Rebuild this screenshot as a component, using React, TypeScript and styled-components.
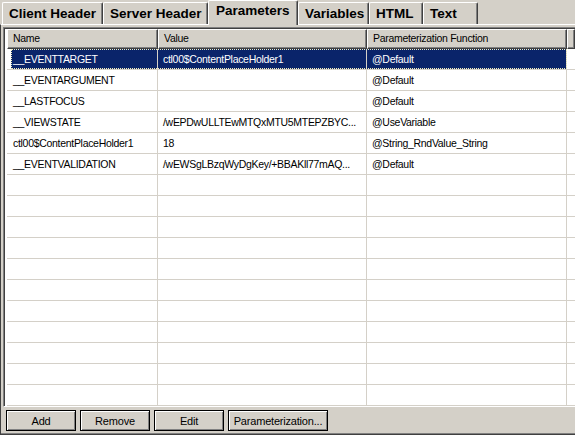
import React from "react";
import styled, { createGlobalStyle } from "styled-components";

const GlobalStyle = createGlobalStyle`
  html, body {
    margin: 0;
    padding: 0;
    background: #d4d0c8;
  }
  body {
    font-family: "Liberation Sans", Arial, sans-serif;
    font-size: 11px;
    color: #000;
  }
`;

const Window = styled.div`
  width: 575px;
  height: 435px;
  display: flex;
  flex-direction: column;
  background: #d4d0c8;
  overflow: hidden;
`;

const TabStrip = styled.div`
  display: flex;
  align-items: flex-end;
  height: 25px;
  padding-left: 2px;
  position: relative;
  z-index: 1;
`;

const Tab = styled.div<{ $active?: boolean; $width: number }>`
  box-sizing: border-box;
  width: ${(p) => p.$width}px;
  height: ${(p) => (p.$active ? 25 : 22)}px;
  margin-bottom: ${(p) => (p.$active ? 0 : 1)}px;
  padding: ${(p) => (p.$active ? "2px 0 0 7px" : "3px 0 0 6px")};
  border-top: 1px solid #fff;
  border-left: 1px solid #fff;
  border-right: 1px solid #404040;
  box-shadow: inset -1px 0 #808080;
  border-radius: 2px 2px 0 0;
  background: #d4d0c8;
  font-size: 13.5px;
  font-weight: bold;
  line-height: 16px;
  white-space: nowrap;
  color: #000;
`;

const Panel = styled.div`
  flex: 1;
  display: flex;
  flex-direction: column;
  border-top: 1px solid #fff;
  margin-top: -1px;
  border-left: 1px solid #404040;
  border-bottom: 1px solid #404040;
  box-shadow: inset 0 -1px #808080;
  padding: 2px 0 0 2px;
`;

const ListView = styled.div`
  height: 377px;
  border-top: 1px solid #808080;
  border-left: 1px solid #808080;
  border-bottom: 1px solid #fff;
  box-shadow: inset 1px 1px #404040;
  padding: 1px 0 0 3px;
  background: #fff;
  overflow: hidden;
`;

const HeaderRow = styled.div`
  display: flex;
  height: 20px;
`;

const HeaderCell = styled.div<{ $width?: number }>`
  box-sizing: border-box;
  ${(p) => (p.$width ? `width: ${p.$width}px;` : "flex: 1;")}
  height: 20px;
  padding-left: 5px;
  background: #d4d0c8;
  border-top: 1px solid #fff;
  border-left: 1px solid #fff;
  border-right: 1px solid #404040;
  border-bottom: 1px solid #404040;
  box-shadow: inset -1px -1px #808080;
  font-size: 10.5px;
  letter-spacing: -0.3px;
  line-height: 17px;
  white-space: nowrap;
  overflow: hidden;
`;

const Row = styled.div`
  display: flex;
  height: 21px;
  box-sizing: border-box;
  border-bottom: 1px solid #d4d0c8;
  padding-left: 4px;
`;

const Selection = styled.div<{ $selected?: boolean }>`
  display: flex;
  background: ${(p) => (p.$selected ? "#0a246a" : "transparent")};
  color: ${(p) => (p.$selected ? "#fff" : "#000")};
  outline: ${(p) => (p.$selected ? "1px dotted #f4f0c0" : "none")};
  outline-offset: -1px;
`;

const Cell = styled.div<{ $width: number; $first?: boolean }>`
  box-sizing: border-box;
  width: ${(p) => p.$width}px;
  height: 20px;
  padding-left: ${(p) => (p.$first ? 2 : 5)}px;
  border-right: 1px solid #d4d0c8;
  font-size: 10.5px;
  letter-spacing: -0.3px;
  line-height: 20px;
  white-space: nowrap;
  overflow: hidden;
`;

const Filler = styled.div`
  flex: 1;
`;

const ButtonBar = styled.div`
  display: flex;
  gap: 4px;
  margin-top: 3px;
  padding-left: 3px;
`;

const Button = styled.button<{ $width: number }>`
  box-sizing: border-box;
  width: ${(p) => p.$width}px;
  height: 21px;
  padding: 0;
  background: #d4d0c8;
  border: 1px solid #000;
  box-shadow: inset 1px 1px #fff, inset -1px -1px #808080;
  font-family: "Liberation Sans", Arial, sans-serif;
  font-size: 11px;
  letter-spacing: -0.2px;
  color: #000;
  cursor: default;
`;

const tabs = [
  { label: "Client Header", width: 101 },
  { label: "Server Header", width: 105 },
  { label: "Parameters", width: 90, active: true },
  { label: "Variables", width: 71 },
  { label: "HTML", width: 54 },
  { label: "Text", width: 55 },
];

const rows = [
  ["__EVENTTARGET", "ctl00$ContentPlaceHolder1", "@Default"],
  ["__EVENTARGUMENT", "", "@Default"],
  ["__LASTFOCUS", "", "@Default"],
  ["__VIEWSTATE", "/wEPDwULLTEwMTQxMTU5MTEPZBYC...", "@UseVariable"],
  ["ctl00$ContentPlaceHolder1", "18", "@String_RndValue_String"],
  ["__EVENTVALIDATION", "/wEWSgLBzqWyDgKey/+BBAKll77mAQ...", "@Default"],
];

const TOTAL_ROWS = 17;
const colWidths = [147, 209, 200];

export default function App() {
  const allRows = [...rows, ...Array(TOTAL_ROWS - rows.length).fill(["", "", ""])];
  return (
    <Window>
      <GlobalStyle />
      <TabStrip>
        {tabs.map((t) => (
          <Tab key={t.label} $active={t.active} $width={t.width}>
            {t.label}
          </Tab>
        ))}
      </TabStrip>
      <Panel>
        <ListView>
          <HeaderRow>
            <HeaderCell $width={151}>Name</HeaderCell>
            <HeaderCell $width={209}>Value</HeaderCell>
            <HeaderCell $width={200}>Parameterization Function</HeaderCell>
            <HeaderCell />
          </HeaderRow>
          {allRows.map((r: string[], i: number) => (
            <Row key={i}>
              <Selection $selected={i === 0}>
                {r.map((text, j) => (
                  <Cell key={j} $width={colWidths[j]} $first={j === 0}>
                    {text}
                  </Cell>
                ))}
              </Selection>
              <Filler />
            </Row>
          ))}
        </ListView>
        <ButtonBar>
          <Button $width={70}>Add</Button>
          <Button $width={70}>Remove</Button>
          <Button $width={70}>Edit</Button>
          <Button $width={100}>Parameterization...</Button>
        </ButtonBar>
      </Panel>
    </Window>
  );
}
